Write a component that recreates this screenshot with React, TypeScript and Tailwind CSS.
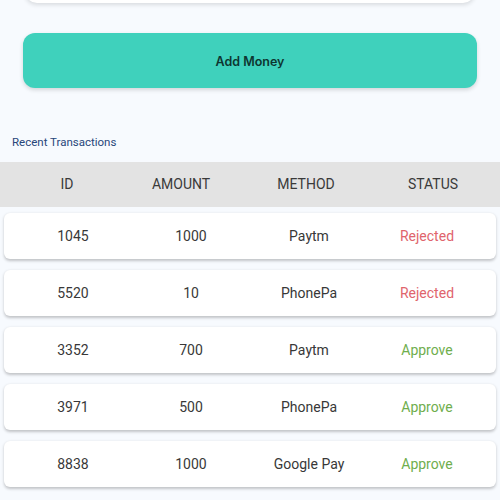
import React from 'react';

interface Transaction {
  id: number;
  amount: number;
  method: string;
  status: 'Rejected' | 'Approve';
}

const transactions: Transaction[] = [
  { id: 1045, amount: 1000, method: 'Paytm', status: 'Rejected' },
  { id: 5520, amount: 10, method: 'PhonePa', status: 'Rejected' },
  { id: 3352, amount: 700, method: 'Paytm', status: 'Approve' },
  { id: 3971, amount: 500, method: 'PhonePa', status: 'Approve' },
  { id: 8838, amount: 1000, method: 'Google Pay', status: 'Approve' },
];

export default function App() {
  return (
    <div className="w-[500px] h-[500px] overflow-hidden bg-[#f7fafe] font-['Roboto',sans-serif]">
      {/* bottom edge of the balance card above */}
      <div className="mx-[25px] -mt-[57px] h-[60px] bg-white rounded-b-xl shadow-[0_2px_4px_rgba(0,0,0,0.12)]" />

      <div className="px-[23px] pt-[30px]">
        <button className="w-full h-[55px] pt-[3px] rounded-[12px] bg-[#3fd1bc] shadow-[0_2px_4px_rgba(0,0,0,0.15)] font-['Inter',sans-serif] text-[12.5px] font-semibold text-[#0e3631]">
          Add Money
        </button>
      </div>

      <div className="pl-[12px] pt-[46px] h-[74px] text-[11.5px] text-[#28467a]">Recent Transactions</div>

      <div className="h-[45px] bg-[#e3e3e3] grid grid-cols-[114px_114px_136px_118px] pl-[10px] items-center text-center text-[14px] text-[#3a3a3a]">
        <div>ID</div>
        <div>AMOUNT</div>
        <div>METHOD</div>
        <div>STATUS</div>
      </div>

      <div className="flex flex-col gap-[11px] pt-[6px] px-[4px]">
        {transactions.map((t) => (
          <div
            key={t.id}
            className="h-[46px] bg-white rounded-[6px] shadow-[0_1.5px_3px_rgba(0,0,0,0.22)] grid grid-cols-4 px-[10px] items-center text-center text-[14px] text-[#383838]"
          >
            <div>{t.id}</div>
            <div>{t.amount}</div>
            <div>{t.method}</div>
            <div className={t.status === 'Rejected' ? 'text-[#e0646c]' : 'text-[#6fae4d]'}>{t.status}</div>
          </div>
        ))}
      </div>
    </div>
  );
}
